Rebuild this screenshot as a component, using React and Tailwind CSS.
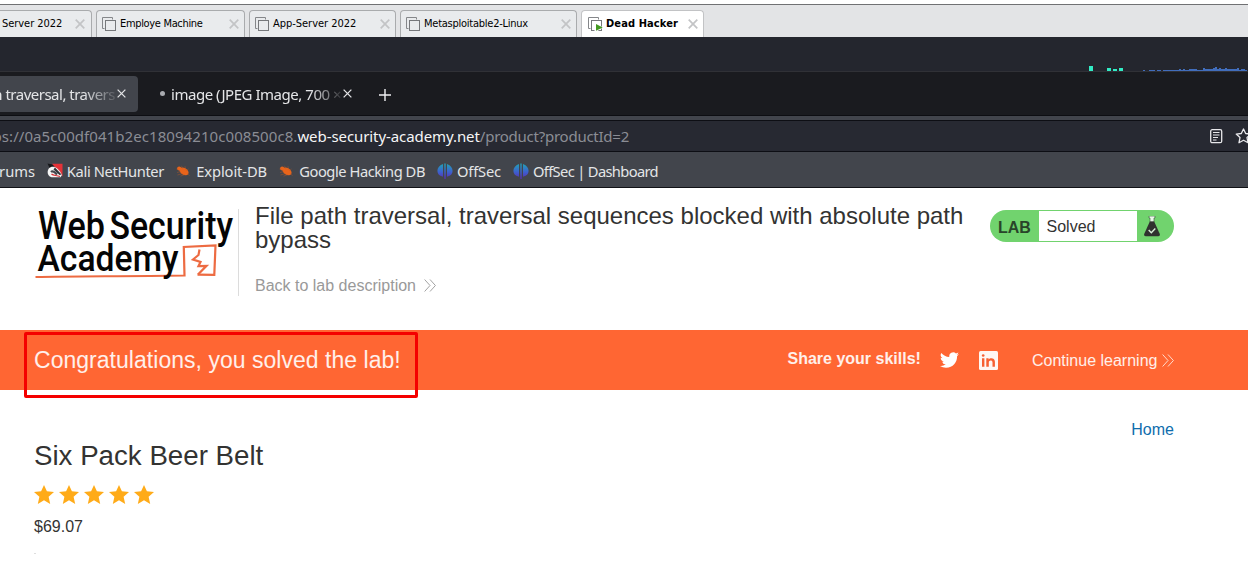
import React from "react";

const VmIcon = ({ running }) => (
  <svg width="16" height="16" viewBox="0 0 16 16" fill="none" className="shrink-0">
    <path d="M3.5 12.5H1.5V1.5H11.5V3.5" stroke="#85878a" />
    <rect x="4.5" y="4.5" width="10" height="10" stroke="#76787b" />
    {running && <path d="M7.500 7V16H9L16 11.500L9 7Z" fill="#fff" />}
    {running && <path d="M9 8V14.700L15.700 11.400Z" fill="#449a22" />}
  </svg>
);

const Cross = ({ size, color, width }) => (
  <svg width={size} height={size} viewBox="0 0 10 10" fill="none" className="shrink-0">
    <path d="M.7.7L9.3 9.3M9.3.7L.7 9.3" stroke={color} strokeWidth={width} />
  </svg>
);

const VmTab = ({ label, className, active }) => (
  <div
    className={`flex h-[27px] shrink-0 items-center rounded-t border border-b-0 pr-[5px] ${
      active ? "border-[#c2c3c5] bg-white pl-[5px] font-bold" : "border-[#a9abad] bg-[#e9ebed] pl-1"
    } ${className}`}
  >
    <VmIcon running={active} />
    <span className="ml-[3px] grow whitespace-nowrap pt-px">{label}</span>
    <Cross size={10} color="#c3c4c6" width={1.7} />
  </div>
);

const NetHunter = () => (
  <svg width="16" height="15" viewBox="0 0 16 15" className="shrink-0">
    <path d="M.5 .5L8 2L3 6Z" fill="#17181c" />
    <path d="M5 .8H15.500V13.500L12 9Z" fill="#e43238" />
    <path d="M13.500 14.300H4.500C-.5 13 -.5 6 3.500 4.200C8 2.500 12 6 15 12Z" fill="#f5f5f5" />
    <path d="M6.500 6.500L8 4.500L14.500 11.500L12.500 12Z" fill="#303137" />
    <path d="M4 9C5.500 7.500 8 9 10 11.500" stroke="#44464c" strokeWidth="2.200" fill="none" />
    <path d="M4.500 11C6.500 13 9 12 13 13.500" stroke="#d52f35" strokeWidth="1.200" fill="none" />
  </svg>
);

const Bug = () => (
  <svg width="14" height="12" viewBox="0 0 14 12" className="shrink-0">
    <g fill="#e8641b">
      <ellipse cx="8" cy="6.400" rx="5" ry="3.300" transform="rotate(32 8 6.400)" />
      <circle cx="3.200" cy="3.500" r="2.100" />
    </g>
    <path d="M1 7.500L5 6.500M1.500 10L6.500 8.500M5.500 .8L7 4.500M9 1.200L9.500 5M12.500 4L10 6M4.500 11.200L9 9.500M.5 4H3M13.500 10.500L11 8.500" stroke="#c85c20" strokeWidth=".7" opacity=".55" />
  </svg>
);

const OffSec = ({ id }) => (
  <svg width="16" height="16" viewBox="0 0 16 16" className="shrink-0">
    <defs>
      <linearGradient id={id} x1="0" y1="0" x2="0" y2="1">
        <stop offset="0" stopColor="#20a4b5" />
        <stop offset=".55" stopColor="#3d60ce" />
        <stop offset="1" stopColor="#5a2bb0" />
      </linearGradient>
    </defs>
    <path
      fill={`url(#${id})`}
      d="M6 .9V13.800C4 13 3.500 13.200 3 12.600C-.9 10-.7 3.200 6 .9ZM7.300 .5H8.700V16H7.300ZM10 .9C16.700 3.200 16.900 10 13 12.600C12.500 13.200 12 13 10 13.800Z"
    />
  </svg>
);

const Chevrons = ({ color }) => (
  <svg width="12" height="13" viewBox="0 0 12 13" fill="none" className="shrink-0">
    <path d="M.6.5L6 6.500L.6 12.500M6 .5L11.400 6.500L6 12.500" stroke={color} strokeWidth=".9" />
  </svg>
);

const AcademyLogo = () => (
  <svg width="204" height="78" viewBox="0 0 204 78" className="shrink-0">
    <path d="M.5 73C40 72 90 72.500 149.500 71.500L148.800 43L180.500 41.500L179.300 70.800L162.500 70.600" fill="none" stroke="#ed6b42" strokeWidth="2.200" />
    <path d="M164.500 45.500L163.500 51L158 55.500L165.500 58L163.500 62L171.500 61.800L163 70.500" fill="none" stroke="#ed6b42" strokeWidth="2.200" />
    <g fontFamily="Roboto, sans-serif" fontWeight="500" fill="#050505">
      <text x="3" y="34.500" fontSize="38.500" textLength="67" lengthAdjust="spacingAndGlyphs">Web</text>
      <text x="74.500" y="34.500" fontSize="38.500" textLength="123.500" lengthAdjust="spacingAndGlyphs">Security</text>
      <text x="2.500" y="67" fontSize="37.500" textLength="141" lengthAdjust="spacingAndGlyphs">Academy</text>
    </g>
  </svg>
);

const Star = () => (
  <svg width="20" height="19" viewBox="0 0 20 19" className="shrink-0">
    <path fill="#ffab19" d="M10 0L12.900 6.300L20 7L14.600 11.800L16.200 19L10 15.300L3.800 19L5.400 11.800L0 7L7.100 6.300Z" />
  </svg>
);

const Bookmark = ({ icon, children, className }) => (
  <div className={`flex shrink-0 items-center whitespace-nowrap ${className}`}>
    {icon}
    <span className="grow text-right">{children}</span>
  </div>
);

const activity = [1, 0, 0, 1, 1, 1, 0, 1, 1, 0, 1, 1, 1, 1, 1, 1, 1, 1, 2, 1, 2, 1, 1, 2, 2, 2, 2, 1, 1, 1, 3, 2, 2, 2, 2, 3, 4, 2, 3, 2, 2, 3, 2, 2, 2, 2, 2, 3, 1, 2, 2, 1];

export default function App() {
  return (
    <div className="relative flex h-[574px] w-[1248px] flex-col overflow-hidden bg-white font-['Liberation_Sans',Arial,sans-serif] text-[#333332]">
      <div className="h-1 shrink-0 bg-white" />
      <div className="flex h-[33px] shrink-0 items-end gap-1 overflow-hidden border-t border-[#707173] bg-[#e3e4e6] font-['DejaVu_Sans_Condensed','DejaVu_Sans',sans-serif] text-[11px] text-black">
        <div className="flex h-[27px] w-[92px] shrink-0 items-center rounded-tr border-r border-t border-[#a9abad] bg-[#e9ebed] pl-[2px] pr-[6px]">
          <span className="grow whitespace-nowrap pt-px tracking-[-0.05px]">Server 2022</span>
          <Cross size={10} color="#c3c4c6" width={1.7} />
        </div>
        <VmTab label="Employe Machine" className="w-[149px] tracking-[-0.33px]" />
        <VmTab label="App-Server 2022" className="w-[147px] tracking-[-0.03px]" />
        <VmTab label="Metasploitable2-Linux" className="w-[177px] tracking-[-0.25px]" />
        <VmTab label="Dead Hacker" className="w-[123px] tracking-[0.1px]" active />
      </div>

      <div className="flex h-[35px] shrink-0 items-end border-b border-[#303136] bg-[#24262e] pl-[1089px]">
        <div className="flex w-[54px] items-end">
          <div className="h-[5px] w-1 bg-[#32ecc5]" />
          <div className="ml-[14px] h-[3px] w-1 bg-[#32ecc5]" />
          <div className="ml-[2px] h-[2px] w-1 bg-[#32ecc5]" />
          <div className="ml-[2px] h-[3px] w-1 bg-[#32ecc5]" />
        </div>
        <svg width="105" height="4" viewBox="0 0 105 4" className="shrink-0">
          {activity.map((h, i) => (
            <rect key={i} x={i * 2} y={4 - h} width="2" height={h} fill="#416dbb" />
          ))}
        </svg>
      </div>

      <div className="flex h-[44px] shrink-0 items-center border-b border-[#0d0e12] bg-[#1a1b1f] font-['Noto_Sans',sans-serif] text-[15px] text-[#e4e5e7]">
        <div className="flex h-9 w-[138px] shrink-0 items-center rounded-r bg-[#42454c]">
          <div className="flex w-[115px] justify-end overflow-hidden whitespace-nowrap pt-[2px] tracking-[-0.5px] [mask-image:linear-gradient(to_right,black_72%,transparent_105%)]">
            path traversal, travers
          </div>
          <span className="ml-[2px] flex"><Cross size={9} color="#e4e5e7" width={1.4} /></span>
        </div>
        <div className="ml-[22px] h-[5px] w-[5px] shrink-0 rounded-full bg-[#a9abb0]" />
        <div className="ml-[6px] w-[170px] shrink-0 overflow-hidden whitespace-nowrap pt-[2px] tracking-[-0.47px] [mask-image:linear-gradient(to_right,black_82%,transparent_103%)]">
          image (JPEG Image, 700 ×
        </div>
        <span className="ml-[2px] flex"><Cross size={9} color="#e4e5e7" width={1.4} /></span>
        <svg width="12" height="12" viewBox="0 0 12 12" className="ml-[26.500px] mt-[2px] shrink-0">
          <path d="M6 0V12M0 6H12" stroke="#f0f0f2" strokeWidth="1.4" />
        </svg>
      </div>

      <div className="h-1 shrink-0 bg-[#42454c]" />
      <div className="flex h-8 shrink-0 items-center border-y border-[#0d0e14] bg-[#272932] font-['Noto_Sans',sans-serif] text-[15px] text-[#8b8d95]">
        <div className="flex w-[629px] shrink-0 justify-end overflow-hidden whitespace-nowrap">
          <span className="tracking-[0.07px]">https://0a5c00df041b2ec18094210c008500c8.</span>
          <span className="tracking-[-0.08px] text-[#f5f5f6]">web-security-academy.net</span>
          <span className="tracking-[-0.25px]">/product?productId=2</span>
        </div>
        <svg width="14" height="16" viewBox="0 0 14 16" fill="none" stroke="#e8e8eb" className="ml-[580px] shrink-0">
          <rect x="1.700" y="1.700" width="11" height="13" rx="1.500" strokeWidth="1.300" />
          <path d="M4 4.500H10.500M4 7H10.500M4 9.500H9M4 12H7.500" strokeWidth="1.100" />
        </svg>
        <svg width="17" height="16" viewBox="0 0 17 16" fill="none" stroke="#e8e8eb" className="ml-[12px] shrink-0">
          <path d="M8.500 1L10.700 5.500L15.800 6.100L12 9.600L13 14.700L8.500 12.200L4 14.700L5 9.600L1.200 6.100L6.300 5.500Z" strokeWidth="1.300" strokeLinejoin="round" />
        </svg>
      </div>

      <div className="flex h-9 shrink-0 items-center border-b border-[#111216] bg-[#42454c] pb-px pt-[4px] font-['Noto_Sans',sans-serif] text-[14.7px] text-[#e4e5e7]">
        <div className="flex w-[35px] shrink-0 justify-end overflow-hidden">Forums</div>
        <Bookmark icon={<NetHunter />} className="ml-3 w-[117px] tracking-[-0.36px]">Kali NetHunter</Bookmark>
        <Bookmark icon={<Bug />} className="ml-[12px] w-[91px] tracking-[-0.1px]">Exploit-DB</Bookmark>
        <Bookmark icon={<Bug />} className="ml-[12px] w-[146px] tracking-[-0.45px]">Google Hacking DB</Bookmark>
        <Bookmark icon={<OffSec id="offsec-a" />} className="ml-[12px] w-[64px] tracking-[-0.15px]">OffSec</Bookmark>
        <Bookmark icon={<OffSec id="offsec-b" />} className="ml-[12px] w-[145px] tracking-[-0.65px]">OffSec | Dashboard</Bookmark>
      </div>

      <header className="flex h-[142px] shrink-0 items-start pl-[35px] pt-[16px]">
        <AcademyLogo />
        <div className="-ml-px mt-[5px] h-[87px] w-px shrink-0 bg-[#dcdcdc]" />
        <div className="ml-4 w-[735px] shrink-0">
          <h2 className="text-[24px] leading-6">File path traversal, traversal sequences blocked with absolute path bypass</h2>
          <a className="mt-6 flex items-center gap-[8.500px] text-[16px] leading-[19px] text-[#999]">
            <span>Back to lab description</span>
            <Chevrons color="#999" />
          </a>
        </div>
        <div className="mt-[6px] flex h-8 w-[184px] shrink-0 items-stretch overflow-hidden rounded-full bg-[#71d36e] py-px">
          <span className="w-[49px] pl-2 pt-[1px] text-[16px] font-bold leading-8 text-[#29442a]">LAB</span>
          <span className="w-[98px] bg-white pl-[7.500px] text-[16px] leading-[31px]">Solved</span>
          <svg width="16" height="21" viewBox="0 0 16 21" className="ml-[7px] mt-[5px]">
            <path d="M5 0H11V2H10V6H6V2H5Z" fill="#e9f7e9" stroke="#486748" strokeWidth=".7" />
            <path d="M5.800 5.500H10.200L15.800 18Q16.300 20.300 14 20.300H2Q-.3 20.300.2 18Z" fill="#30312f" />
            <path d="M4.700 14L7.300 16.700L11.300 12.500" stroke="#d9f0d9" strokeWidth="1.400" fill="none" />
          </svg>
        </div>
      </header>

      <section className="flex h-[60px] shrink-0 items-center bg-[#ff6633] pl-[34px] text-[16px] text-white/90">
        <h4 className="w-[753.500px] shrink-0 text-[23px] tracking-[0.03px]">Congratulations, you solved the lab!</h4>
        <span className="w-[152.500px] shrink-0 whitespace-nowrap pb-[2px] font-bold">Share your skills!</span>
        <svg width="19" height="16" viewBox="0 2 24 20" fill="#fff" className="shrink-0">
          <path d="M23.95 4.570a10 10 0 0 1-2.820.770 4.960 4.960 0 0 0 2.160-2.720c-.95.550-2 .95-3.120 1.180a4.920 4.920 0 0 0-8.380 4.480C7.690 8.090 4.070 6.130 1.640 3.160a4.920 4.920 0 0 0 1.520 6.570 4.900 4.900 0 0 1-2.230-.61v.06a4.920 4.920 0 0 0 3.950 4.830 5 5 0 0 1-2.210.08 4.940 4.940 0 0 0 4.600 3.420A9.870 9.870 0 0 1 0 19.540a14 14 0 0 0 7.550 2.210c9.050 0 14-7.500 14-13.980l-.02-.64a9.900 9.900 0 0 0 2.420-2.560Z" />
        </svg>
        <svg width="19" height="19" viewBox="0 0 19 19" className="ml-5 mt-px shrink-0">
          <rect width="19" height="19" rx="1.500" fill="#fff6f2" />
          <path d="M3 7.300H5.400V15.800H3ZM7.300 7.300H9.600V8.400C11 6.500 15.900 6.500 15.900 10.800V15.800H13.500V11.400C13.500 8.700 9.800 8.800 9.800 11.400V15.800H7.300Z" fill="#f75f31" />
          <circle cx="4.200" cy="4.500" r="1.350" fill="#f75f31" />
        </svg>
        <a className="ml-[34px] flex items-center gap-[5px] whitespace-nowrap">
          <span className="pt-[2px]">Continue learning</span>
          <Chevrons color="#ffe5dc" />
        </a>
      </section>

      <main className="flex grow items-start justify-between pl-[34px] pr-[74px]">
        <div>
          <h3 className="mt-[49px] text-[27.700px] leading-[34px]">Six Pack Beer Belt</h3>
          <div className="mt-[12px] flex gap-[5px] pl-[.4px]">
            <Star /><Star /><Star /><Star /><Star />
          </div>
          <p className="mt-[13px] text-[16px] leading-[19px]">$69.07</p>
          <div className="mt-[17px] h-px w-[2px] bg-[#dedede]" />
        </div>
        <a className="mt-[30px] text-[16px] leading-[19px] text-[#0f6dad]">Home</a>
      </main>

      <div className="absolute left-[24px] top-[332px] h-[66px] w-[394px] rounded-[2px] border-3 border-[#f40000]" />
    </div>
  );
}
